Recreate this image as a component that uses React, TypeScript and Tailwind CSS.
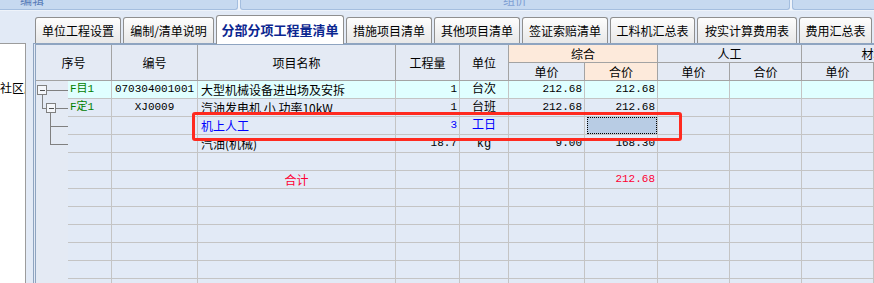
import React from "react";

// column widths: tree | 序号 | 编号 | 项目名称 | 工程量 | 单位 | 综合(单价,合价) | 人工(单价,合价) | 材料(单价,合价)
const COLS =
  "grid grid-cols-[32px_44px_86px_198px_64px_49px_76px_73px_72px_72px_72px_72px] w-max";

const tabs = [
  { label: "单位工程设置", w: "w-[86px]" },
  { label: "编制/清单说明", w: "w-[91px]" },
  { label: "分部分项工程量清单", w: "w-[128px]", active: true },
  { label: "措施项目清单", w: "w-[86px]" },
  { label: "其他项目清单", w: "w-[86px]" },
  { label: "签证索赔清单", w: "w-[86px]" },
  { label: "工料机汇总表", w: "w-[85px]" },
  { label: "按实计算费用表", w: "w-[100px]" },
  { label: "费用汇总表", w: "w-[73px]" },
];

type Row = {
  seq?: string;
  code?: string;
  name?: string;
  qty?: string;
  unit?: string;
  price?: string;
  total?: string;
  color?: string;
  bg?: string;
  selected?: boolean;
  center?: boolean;
};

const rows: Row[] = [
  {
    seq: "F目1",
    code: "070304001001",
    name: "大型机械设备进出场及安拆",
    qty: "1",
    unit: "台次",
    price: "212.68",
    total: "212.68",
    bg: "bg-[#e0ffff]",
  },
  {
    seq: "F定1",
    code: "XJ0009",
    name: "汽油发电机 小 功率10kW",
    qty: "1",
    unit: "台班",
    price: "212.68",
    total: "212.68",
  },
  { name: "机上人工", qty: "3", unit: "工日", color: "text-[#0000ff]", selected: true },
  { name: "汽油(机械)", qty: "18.7", unit: "kg", price: "9.00", total: "168.30" },
  {},
  { name: "合计", total: "212.68", color: "text-[#ff0033]", center: true },
  {},
  {},
  {},
  {},
  {},
  {},
];

const MONO = "font-['Liberation_Mono','Noto_Sans_CJK_SC',monospace] text-[11px]";

function TreeLines({ index }: { index: number }) {
  const c = "#808080";
  return (
    <svg width="32" height="18" shapeRendering="crispEdges">
      {index === 0 && (
        <>
          <rect x="1.5" y="4.5" width="9" height="9" fill="#f4f6fa" stroke={c} />
          <line x1="3.5" y1="9.5" x2="8.5" y2="9.5" stroke="#505050" />
          <line x1="10.5" y1="9.5" x2="32" y2="9.5" stroke={c} />
          <line x1="6.5" y1="13.5" x2="6.5" y2="18" stroke={c} />
        </>
      )}
      {index === 1 && (
        <>
          <line x1="6.5" y1="0" x2="6.5" y2="9.5" stroke={c} />
          <line x1="6.5" y1="9.5" x2="10.5" y2="9.5" stroke={c} />
          <rect x="10.5" y="4.5" width="9" height="9" fill="#f4f6fa" stroke={c} />
          <line x1="12.5" y1="9.5" x2="17.5" y2="9.5" stroke="#505050" />
          <line x1="19.5" y1="9.5" x2="32" y2="9.5" stroke={c} />
          <line x1="14.5" y1="13.5" x2="14.5" y2="18" stroke={c} />
        </>
      )}
      {index === 2 && (
        <>
          <line x1="14.5" y1="0" x2="14.5" y2="18" stroke={c} />
          <line x1="14.5" y1="9.5" x2="32" y2="9.5" stroke={c} />
        </>
      )}
      {index === 3 && (
        <>
          <line x1="14.5" y1="0" x2="14.5" y2="9.5" stroke={c} />
          <line x1="14.5" y1="9.5" x2="32" y2="9.5" stroke={c} />
        </>
      )}
    </svg>
  );
}

function HeadCell({
  children,
  span = "",
  peach = false,
}: {
  children?: React.ReactNode;
  span?: string;
  peach?: boolean;
}) {
  return (
    <div
      className={`${span} ${
        peach ? "bg-[#fdeadb]" : "bg-[#e4eaf4]"
      } border-r border-b border-[#a3a3a3] flex items-center justify-center text-[12px] leading-none whitespace-nowrap overflow-hidden`}
    >
      {children}
    </div>
  );
}

function DataRow({ row, index }: { row: Row; index: number }) {
  const cell = `border-r border-b border-[#c4c4c4] h-[18px] flex items-center overflow-hidden whitespace-nowrap ${
    row.bg ?? ""
  }`;
  return (
    <div className={`${COLS} h-[18px] ${row.color ?? "text-black"}`}>
      <div className="bg-[#e4eaf4] h-[18px]">
        {index < 4 && <TreeLines index={index} />}
      </div>
      <div className={`${cell} pl-[2px] text-[#008000] ${MONO}`}>{row.seq}</div>
      <div className={`${cell} justify-center ${MONO}`}>{row.code}</div>
      <div
        className={`${cell} ${
          row.center ? "justify-center" : "pl-[3px]"
        } text-[12px] font-['Noto_Sans_CJK_SC',sans-serif]`}
      >
        {row.name}
      </div>
      <div className={`${cell} justify-end pr-[2px] ${MONO}`}>{row.qty}</div>
      <div className={`${cell} justify-center text-[12px] font-['Liberation_Mono','Noto_Sans_CJK_SC',monospace]`}>
        {row.unit}
      </div>
      <div className={`${cell} justify-end pr-[2px] ${MONO}`}>{row.price}</div>
      <div className={`${cell} justify-end pr-[2px] ${MONO}`}>
        {row.selected ? (
          <div className="w-full h-full -mr-[2px] bg-[#b8cce4] border border-dotted border-black" />
        ) : (
          row.total
        )}
      </div>
      <div className={cell} />
      <div className={cell} />
      <div className={cell} />
      <div className={cell} />
    </div>
  );
}

export default function App() {
  return (
    <div className="relative w-[874px] h-[283px] overflow-hidden bg-[#e2eaf6] font-['Noto_Sans_CJK_SC',sans-serif] text-black">
      {/* top ribbon strip */}
      <div className="flex h-[11px] bg-[#eef3fa]">
        <div className="w-[238px] h-[10px] bg-[#c6d9f0] border-b border-r border-[#a4bedf] rounded-br-[3px] overflow-hidden">
          <div className="ml-[20px] -mt-[6px] text-[12px] leading-[12px] text-[#5a7db8]">编辑</div>
        </div>
        <div className="ml-[2px] w-[550px] h-[10px] bg-[#c6d9f0] border-b border-l border-r border-[#a4bedf] rounded-b-[3px] overflow-hidden">
          <div className="ml-[262px] -mt-[6px] text-[12px] leading-[12px] text-[#7f9fd3]">组价</div>
        </div>
        <div className="ml-[2px] flex-1 h-[10px] bg-[#c6d9f0] border-b border-l border-[#a4bedf] rounded-bl-[3px]" />
      </div>

      <div className="flex h-[272px]">
        {/* left tree panel */}
        <div className="w-[26px] flex flex-col">
          <div className="h-[32px]" />
          <div className="flex-1 bg-white border-t border-r border-[#9c9c9c] overflow-hidden">
            <div className="mt-[37px] text-[12px] leading-[14px] whitespace-nowrap">社区服务</div>
          </div>
        </div>

        {/* main tab area */}
        <div className="ml-[7px] flex-1 flex flex-col min-w-0">
          <div className="h-[32px] flex items-end gap-[2px] pl-[2px]">
            {tabs.map((t) =>
              t.active ? (
                <div
                  key={t.label}
                  className={`${t.w} h-[29px] -mb-[1px] relative z-10 bg-white border border-b-0 border-[#8f8f8f] rounded-t-[3px] flex items-center justify-center text-[13px] font-bold text-[#0b2690] whitespace-nowrap`}
                >
                  {t.label}
                </div>
              ) : (
                <div
                  key={t.label}
                  className={`${t.w} h-[26px] bg-linear-to-b from-[#fdfdfd] to-[#e8e8e8] border border-b-0 border-[#8f8f8f] rounded-t-[3px] flex items-center justify-center text-[12px] whitespace-nowrap`}
                >
                  {t.label}
                </div>
              )
            )}
          </div>

          <div className="flex-1 border-l border-t border-[#8ea4c0] overflow-hidden">
            <div className="ml-[1px] h-full border-l border-t border-[#8ea4c0] overflow-hidden">
              {/* header */}
              <div className={`${COLS} grid-rows-[18px_18px]`}>
                <HeadCell span="col-span-2 row-span-2">序号</HeadCell>
                <HeadCell span="row-span-2">编号</HeadCell>
                <HeadCell span="row-span-2">项目名称</HeadCell>
                <HeadCell span="row-span-2">工程量</HeadCell>
                <HeadCell span="row-span-2">单位</HeadCell>
                <HeadCell span="col-span-2" peach>
                  综合
                </HeadCell>
                <HeadCell span="col-span-2">人工</HeadCell>
                <HeadCell span="col-span-2">材料</HeadCell>
                <HeadCell>单价</HeadCell>
                <HeadCell peach>合价</HeadCell>
                <HeadCell>单价</HeadCell>
                <HeadCell>合价</HeadCell>
                <HeadCell>单价</HeadCell>
                <HeadCell>合价</HeadCell>
              </div>
              {rows.map((r, i) => (
                <DataRow key={i} row={r} index={i} />
              ))}
            </div>
          </div>
        </div>
      </div>

      {/* red annotation box */}
      <div className="absolute left-[192px] top-[112px] w-[490px] h-[29px] border-[3px] border-[#ff2a1f] rounded-[3px]" />
    </div>
  );
}
